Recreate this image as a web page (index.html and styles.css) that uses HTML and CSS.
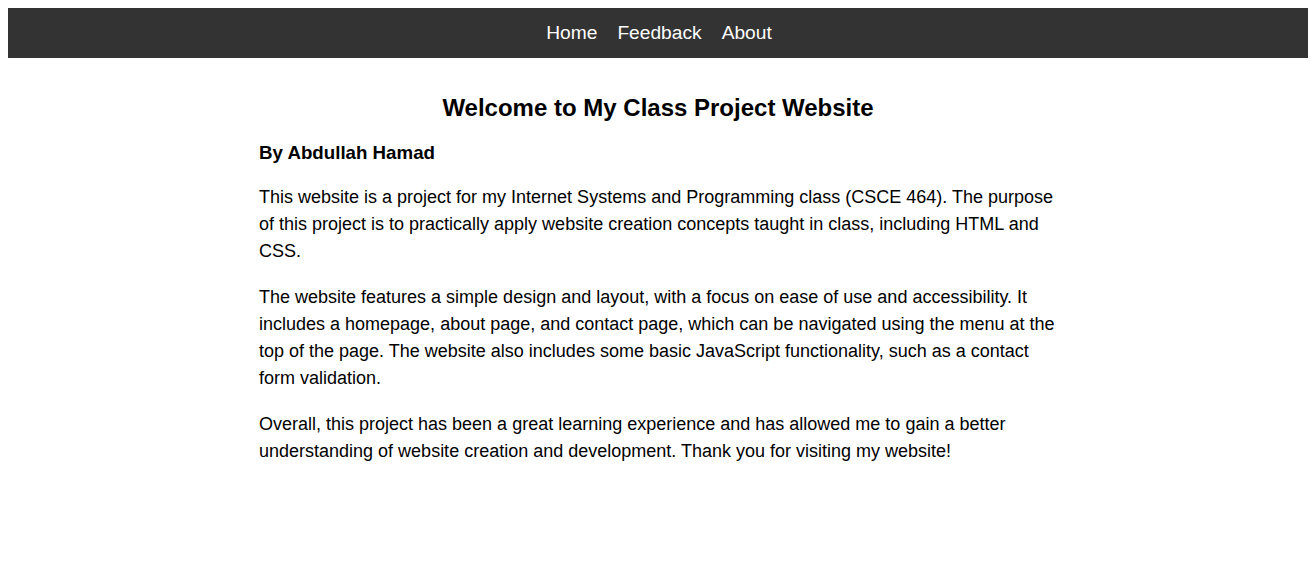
FILE: index.html
```html
<!DOCTYPE html>
<html lang="en">
<head>
<meta charset="utf-8">
<title>My Class Project Website</title>
<link rel="stylesheet" href="styles.css">
</head>
<body>
<nav class="topnav">
  <a href="#" class="nav-link">Home</a>
  <a href="#" class="nav-link">Feedback</a>
  <a href="#" class="nav-link">About</a>
</nav>
<main class="content">
  <h1 class="title">Welcome to My Class Project Website</h1>
  <h3 class="byline">By Abdullah Hamad</h3>
  <p class="para">This website is a project for my Internet Systems and Programming class (CSCE 464). The purpose of this project is to practically apply website creation concepts taught in class, including HTML and CSS.</p>
  <p class="para">The website features a simple design and layout, with a focus on ease of use and accessibility. It includes a homepage, about page, and contact page, which can be navigated using the menu at the top of the page. The website also includes some basic JavaScript functionality, such as a contact form validation.</p>
  <p class="para">Overall, this project has been a great learning experience and has allowed me to gain a better understanding of website creation and development. Thank you for visiting my website!</p>
</main>
</body>
</html>
```
FILE: styles.css
```css
body {
  margin: 8px;
  font-family: "Liberation Sans", Arial, sans-serif;
  color: #000;
  background: #fff;
}
.topnav {
  background: #333333;
  height: 50px;
  margin: 0 -4px 0 -2px;
  display: flex;
  justify-content: center;
  align-items: center;
}
.nav-link {
  color: #ffffff;
  text-decoration: none;
  font-size: 19.2px;
  padding: 0 10px;
}
.content {
  max-width: 798px;
  margin: 0 auto;
  padding-top: 32px;
  font-size: 18px;
  line-height: 1.5;
}
.title {
  font-size: 24px;
  text-align: center;
  margin: 0 0 13px;
}
.byline {
  font-size: 18.72px;
  margin: 0 0 17px;
}
.para {
  margin: 0 0 19px;
}
```
